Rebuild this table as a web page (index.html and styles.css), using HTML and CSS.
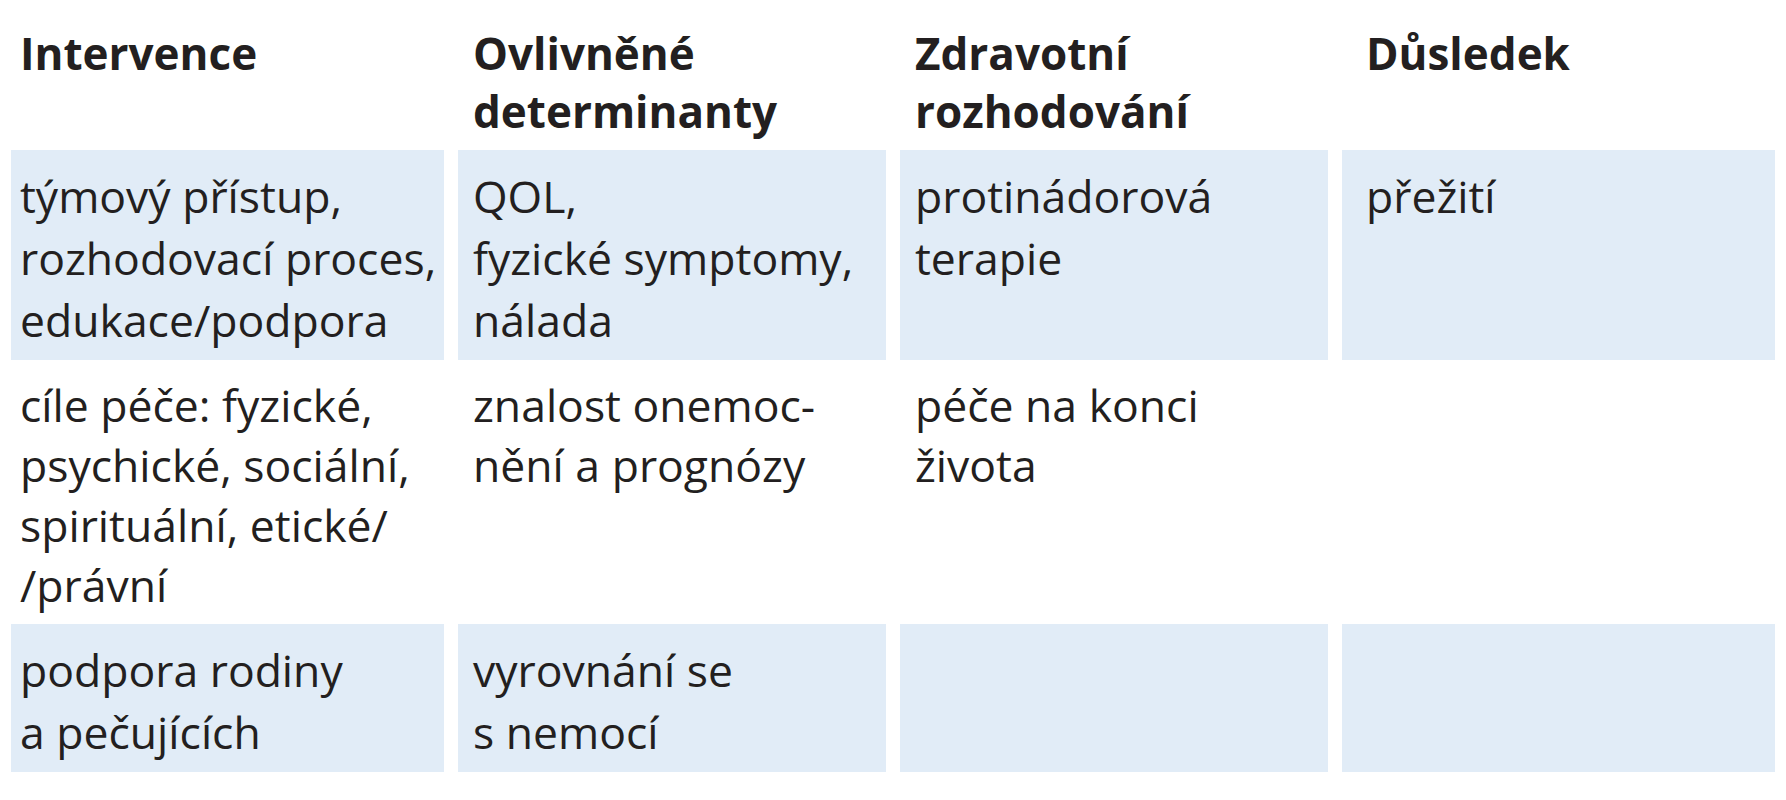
FILE: index.html
```html
<!DOCTYPE html>
<html lang="cs">
<head>
<meta charset="utf-8">
<title>Tabulka</title>
<link rel="stylesheet" href="styles.css">
</head>
<body>
<div class="table">
  <div class="row head">
    <div class="cell c1">Intervence</div>
    <div class="cell c2">Ovlivněné<br>determinanty</div>
    <div class="cell c3">Zdravotní<br>rozhodování</div>
    <div class="cell c4">Důsledek</div>
  </div>
  <div class="row shaded r1">
    <div class="cell c1">týmový přístup,<br>rozhodovací proces,<br>edukace/podpora</div>
    <div class="cell c2">QOL,<br>fyzické symptomy,<br>nálada</div>
    <div class="cell c3">protinádorová<br>terapie</div>
    <div class="cell c4">přežití</div>
  </div>
  <div class="row r2">
    <div class="cell c1">cíle péče: fyzické,<br>psychické, sociální,<br>spirituální, etické/<br>/právní</div>
    <div class="cell c2">znalost onemoc-<br>nění a prognózy</div>
    <div class="cell c3">péče na konci<br>života</div>
    <div class="cell c4"></div>
  </div>
  <div class="row shaded r3">
    <div class="cell c1">podpora rodiny<br>a pečujících</div>
    <div class="cell c2">vyrovnání se<br>s nemocí</div>
    <div class="cell c3"></div>
    <div class="cell c4"></div>
  </div>
</div>
</body>
</html>
```
FILE: styles.css
```css
html, body {
  margin: 0;
  padding: 0;
  background: #ffffff;
}
body {
  font-family: "Open Sans", "Noto Sans", sans-serif;
  color: #231f20;
}
.table {
  margin-left: 11px;
  width: 1764px;
}
.row {
  display: grid;
  grid-template-columns: 433px 428px 428px 433px;
  column-gap: 14px;
}
.cell {
  white-space: nowrap;
  font-size: 44.5px;
  line-height: 62px;
  padding-top: 15px;
  padding-bottom: 9px;
}
.head .cell {
  font-weight: 700;
  font-size: 44px;
  line-height: 58px;
  padding-top: 24px;
  padding-bottom: 10px;
}
.r2 .cell {
  line-height: 60px;
}
.shaded .cell {
  background: #e1ecf7;
}
.c1 { padding-left: 9px; }
.c2 { padding-left: 15px; }
.c3 { padding-left: 15px; }
.c4 { padding-left: 24px; }
```
